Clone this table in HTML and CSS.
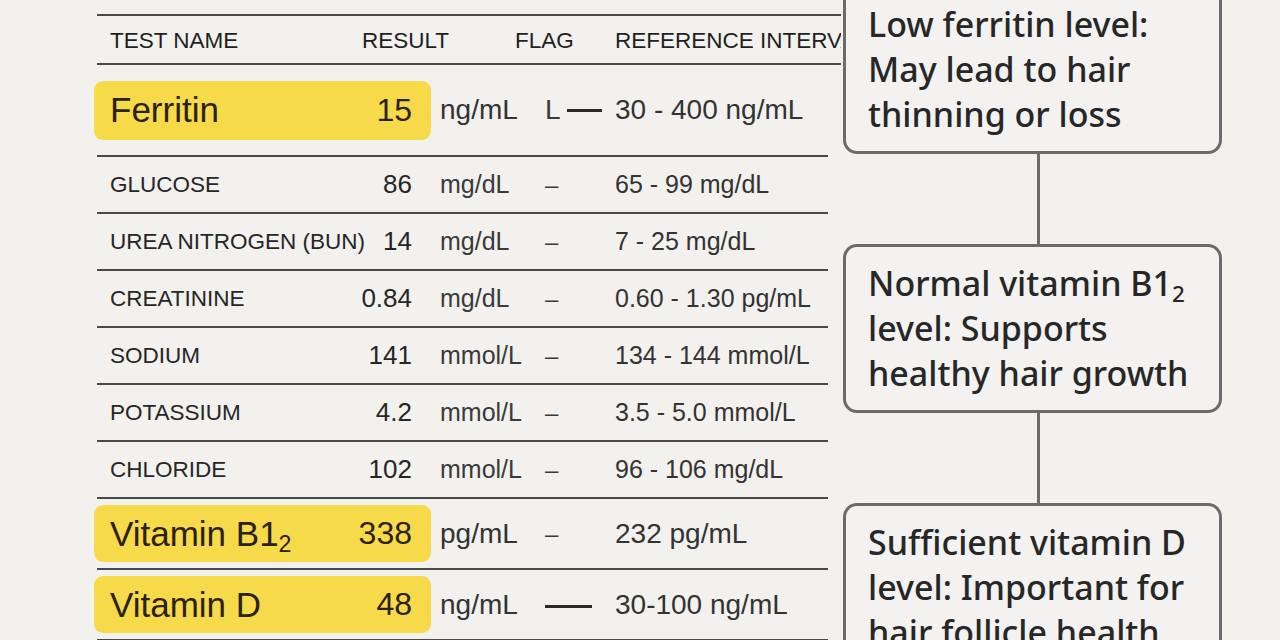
FILE: index.html
```html
<!DOCTYPE html>
<html lang="en">
<head>
<meta charset="utf-8">
<title>Lab results</title>
<link rel="stylesheet" href="styles.css">
</head>
<body>
<div class="page">
  <section class="table">
    <div class="head">
      <span class="h-name">TEST NAME</span>
      <span class="h-result">RESULT</span>
      <span class="h-flag">FLAG</span>
      <span class="h-ref">REFERENCE INTERVAL</span>
    </div>

    <div class="row row-big">
      <div class="main hl hl-big"><span class="name-big">Ferritin</span><span class="res-big">15</span></div>
      <span class="unit unit-big">ng/mL</span>
      <span class="flag flag-big">L <span class="dash-l"></span></span>
      <span class="ref ref-big">30 - 400 ng/mL</span>
    </div>

    <div class="row">
      <div class="main"><span class="name">GLUCOSE</span><span class="res">86</span></div>
      <span class="unit">mg/dL</span><span class="flag">–</span><span class="ref">65 - 99 mg/dL</span>
    </div>
    <div class="row">
      <div class="main"><span class="name">UREA NITROGEN (BUN)</span><span class="res">14</span></div>
      <span class="unit">mg/dL</span><span class="flag">–</span><span class="ref">7 - 25 mg/dL</span>
    </div>
    <div class="row">
      <div class="main"><span class="name">CREATININE</span><span class="res">0.84</span></div>
      <span class="unit">mg/dL</span><span class="flag">–</span><span class="ref">0.60 - 1.30 pg/mL</span>
    </div>
    <div class="row">
      <div class="main"><span class="name">SODIUM</span><span class="res">141</span></div>
      <span class="unit">mmol/L</span><span class="flag">–</span><span class="ref">134 - 144 mmol/L</span>
    </div>
    <div class="row">
      <div class="main"><span class="name">POTASSIUM</span><span class="res">4.2</span></div>
      <span class="unit">mmol/L</span><span class="flag">–</span><span class="ref">3.5 - 5.0 mmol/L</span>
    </div>
    <div class="row">
      <div class="main"><span class="name">CHLORIDE</span><span class="res">102</span></div>
      <span class="unit">mmol/L</span><span class="flag">–</span><span class="ref">96 - 106 mg/dL</span>
    </div>

    <div class="row row-vit">
      <div class="main hl"><span class="name-big">Vitamin B1<sub>2</sub></span><span class="res-big">338</span></div>
      <span class="unit unit-big">pg/mL</span>
      <span class="flag">–</span>
      <span class="ref ref-big">232 pg/mL</span>
    </div>
    <div class="row row-vit">
      <div class="main hl"><span class="name-big">Vitamin D</span><span class="res-big">48</span></div>
      <span class="unit unit-big">ng/mL</span>
      <span class="flag"><span class="dash-long"></span></span>
      <span class="ref ref-big">30-100 ng/mL</span>
    </div>
  </section>

  <aside class="notes">
    <div class="card">Low ferritin level:<br>May lead to hair<br>thinning or loss</div>
    <div class="link"></div>
    <div class="card">Normal vitamin B1<sub>2</sub><br>level: Supports<br>healthy hair growth</div>
    <div class="link"></div>
    <div class="card">Sufficient vitamin D<br>level: Important for<br>hair follicle health</div>
  </aside>
</div>
</body>
</html>
```

FILE: styles.css
```css
* { box-sizing: border-box; }

html, body {
  margin: 0;
  padding: 0;
  height: 640px;
  overflow: hidden;
  background: #f2f1ee;
}

body {
  font-family: "Liberation Sans", Arial, sans-serif;
  color: #232323;
}

.page {
  display: flex;
  align-items: flex-start;
  padding-left: 94px;
  height: 640px;
}

/* ---------- table ---------- */
.table {
  width: 747px;
  flex: none;
  padding-top: 14px;
}

.head {
  display: grid;
  grid-template-columns: 252px 153px 100px 1fr;
  align-items: center;
  height: 51px;
  margin-left: 3px;
  padding-left: 13px;
  padding-top: 2px;
  border-top: 2px solid #4a4a4a;
  border-bottom: 2px solid #4a4a4a;
  font-size: 22.5px;
  color: #1f1f1f;
}

.h-ref {
  white-space: nowrap;
  overflow: hidden;
}

.row {
  width: 731px;
  margin-left: 3px;
  display: grid;
  grid-template-columns: 334px 112px 72px 1fr;
  align-items: center;
  height: 57px;
  border-bottom: 2px solid #4a4a4a;
  white-space: nowrap;
}

.row-big { height: 92px; }
.row-vit { height: 71px; }

.main {
  margin-left: -3px;
  display: flex;
  justify-content: space-between;
  align-items: center;
  padding: 0 19px 0 16px;
}

.hl {
  height: 57px;
  background: #f7da4a;
  border-radius: 9px;
  color: #2a2214;
}

.hl-big { height: 59px; }

.name {
  font-size: 22.5px;
  color: #262626;
}

.res {
  font-size: 26px;
  color: #262626;
}

.name-big {
  font-size: 35px;
}

.res-big {
  font-size: 32px;
}

sub {
  font-size: 0.66em;
  vertical-align: -0.28em;
  line-height: 0;
}

.unit {
  padding-left: 9px;
  font-size: 25px;
  color: #3a3a3a;
}

.unit-big { font-size: 28px; color: #333; }

.flag {
  padding-left: 2px;
  font-size: 24px;
  color: #3a3a3a;
}

.flag-big {
  font-size: 28px;
  display: flex;
  align-items: center;
  gap: 6px;
}

.dash-l {
  display: inline-block;
  width: 35px;
  height: 3px;
  background: #2a2a2a;
}

.dash-long {
  display: inline-block;
  width: 47px;
  height: 3px;
  background: #2a2a2a;
  vertical-align: middle;
}

.ref {
  font-size: 25px;
  color: #333;
}

.ref-big { font-size: 28px; }

/* ---------- notes ---------- */
.notes {
  width: 379px;
  flex: none;
  margin-left: 2px;
  margin-top: -15px;
  display: flex;
  flex-direction: column;
}

.card {
  border: 3px solid #6b6b6b;
  border-radius: 14px;
  padding: 14px 10px 14px 22px;
  background: #f3f2f0;
  font-family: "Noto Sans", "Open Sans", sans-serif;
  font-size: 34px;
  font-weight: 500;
  line-height: 45px;
  color: #272727;
  white-space: nowrap;
}

.link {
  width: 3px;
  height: 90px;
  margin-left: 194px;
  background: #6b6b6b;
}
```
